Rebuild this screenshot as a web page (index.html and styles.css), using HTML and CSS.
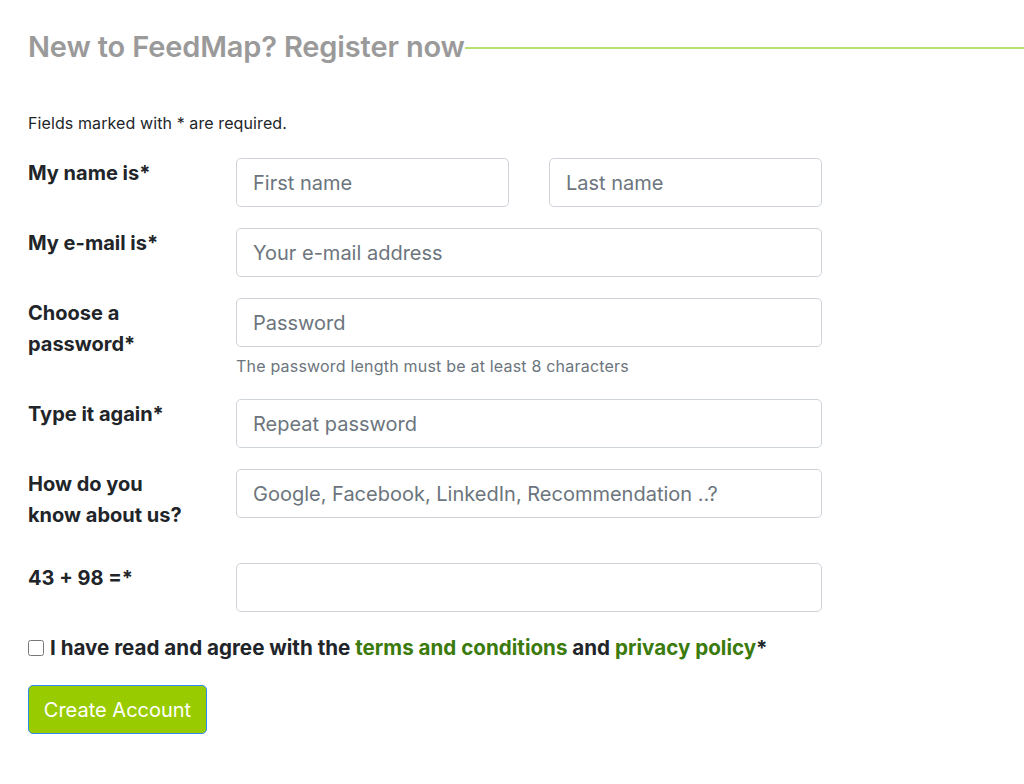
FILE: index.html
```html
<!DOCTYPE html>
<html lang="en">
<head>
<meta charset="utf-8">
<title>Register - FeedMap</title>
<link rel="stylesheet" href="styles.css">
</head>
<body>
<div class="page">
  <h2 class="title"><span>New to FeedMap? Register now</span><span class="title-line"></span></h2>
  <p class="note">Fields marked with * are required.</p>
  <form class="form">
    <div class="row">
      <label class="label">My name is*</label>
      <div class="field split">
        <input class="input" type="text" placeholder="First name">
        <input class="input" type="text" placeholder="Last name">
      </div>
    </div>
    <div class="row">
      <label class="label">My e-mail is*</label>
      <div class="field"><input class="input" type="email" placeholder="Your e-mail address"></div>
    </div>
    <div class="row">
      <label class="label">Choose a password*</label>
      <div class="field">
        <input class="input" type="password" placeholder="Password">
        <div class="help">The password length must be at least 8 characters</div>
      </div>
    </div>
    <div class="row">
      <label class="label">Type it again*</label>
      <div class="field"><input class="input" type="password" placeholder="Repeat password"></div>
    </div>
    <div class="row">
      <label class="label">How do you know about us?</label>
      <div class="field"><input class="input" type="text" placeholder="Google, Facebook, LinkedIn, Recommendation ..?"></div>
    </div>
    <div class="row">
      <label class="label">43 + 98 =*</label>
      <div class="field"><input class="input" type="text"></div>
    </div>
    <div class="agree">
      <input class="check" type="checkbox" id="agree">
      <label for="agree">I have read and agree with the <a href="#">terms and conditions</a> and <a href="#">privacy policy</a>*</label>
    </div>
    <button class="btn" type="button">Create Account</button>
  </form>
</div>
</body>
</html>
```
FILE: styles.css
```css
* { box-sizing: border-box; }
body {
  margin: 0;
  background: #fff;
  color: #212529;
  font-family: Inter, "Liberation Sans", Arial, sans-serif;
}
.page {
  padding: 30px 0 0 28px;
}
.title {
  display: flex;
  align-items: center;
  margin: 0;
  font-size: 29px;
  font-weight: 600;
  line-height: 34px;
  color: #9a9a9a;
  letter-spacing: -0.15px;
}
.title-line {
  flex: 1;
  height: 2px;
  background: #b8e06a;
  margin-top: 1px;
}
.note {
  margin: 48px 0 0;
  font-size: 16px;
  line-height: 22px;
  letter-spacing: 0.1px;
}
.form {
  margin-top: 24px;
}
.row {
  display: flex;
  align-items: flex-start;
  margin-bottom: 21px;
  width: 794px;
}
.label {
  width: 208px;
  flex: none;
  padding-right: 45px;
  padding-bottom: 11px;
  font-size: 20px;
  font-weight: 700;
  line-height: 31px;
}
.field {
  flex: 1;
}
.split {
  display: flex;
  gap: 40px;
}
.input {
  display: block;
  width: 100%;
  height: 49px;
  padding: 0 16px;
  border: 1px solid #ced4da;
  border-radius: 5px;
  background: #fff;
  font-family: inherit;
  font-size: 20px;
  color: #495057;
}
.input::placeholder { color: #6c757d; }
.help {
  margin-top: 7px;
  font-size: 16px;
  line-height: 24px;
  letter-spacing: 0.2px;
  color: #6c757d;
}
.agree {
  display: flex;
  align-items: center;
  margin-top: 1px;
  font-size: 20.6px;
  font-weight: 700;
  line-height: 30px;
}
.check {
  width: 16px;
  height: 16px;
  margin: 0 6px 0 0;
}
.agree a {
  color: #3b7a0c;
  text-decoration: none;
}
.btn {
  display: block;
  margin-top: 22px;
  width: 179px;
  height: 49px;
  padding: 0;
  background: #99cc00;
  color: #fff;
  border: 1px solid #2d8cf0;
  border-radius: 5px;
  font-family: inherit;
  font-size: 20px;
}
```
